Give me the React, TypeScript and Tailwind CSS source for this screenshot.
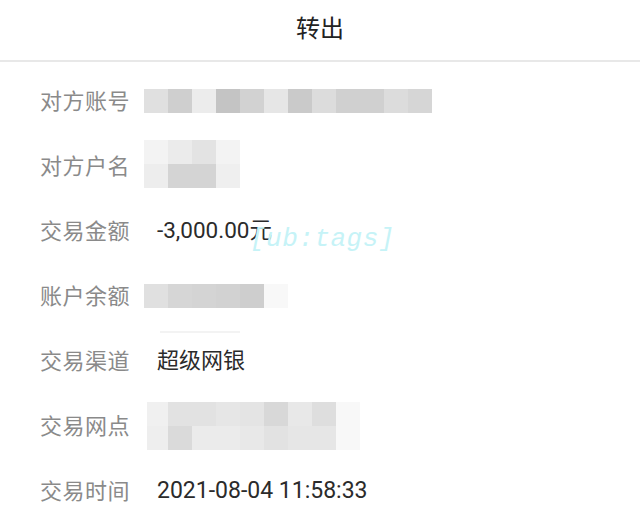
import React from "react";

const row1 = [
  "bg-[#e0e0e0]", "bg-[#cfcfcf]", "bg-[#ececec]", "bg-[#c4c4c4]", "bg-[#d2d2d2]", "bg-[#e6e6e6]",
  "bg-[#cacaca]", "bg-[#dcdcdc]", "bg-[#d0d0d0]", "bg-[#d0d0d0]", "bg-[#dcdcdc]", "bg-[#d6d6d6]",
];
const row2a = ["bg-[#f3f3f3]", "bg-[#ebebeb]", "bg-[#e3e3e3]", "bg-[#f3f3f3]"];
const row2b = ["bg-[#ededed]", "bg-[#d4d4d4]", "bg-[#d4d4d4]", "bg-[#efefef]"];
const row4 = ["bg-[#e0e0e0]", "bg-[#d6d6d6]", "bg-[#d4d4d4]", "bg-[#d2d2d2]", "bg-[#cecece]", "bg-[#f8f8f8]"];
const row6a = ["bg-[#f0f0f0]", "bg-[#e2e2e2]", "bg-[#e2e2e2]", "bg-[#e6e6e6]", "bg-[#e4e4e4]", "bg-[#d8d8d8]", "bg-[#e8e8e8]", "bg-[#dedede]", "bg-[#f8f8f8]"];
const row6b = ["bg-[#eeeeee]", "bg-[#dadada]", "bg-[#ebebeb]", "bg-[#ebebeb]", "bg-[#e8e8e8]", "bg-[#e2e2e2]", "bg-[#e6e6e6]", "bg-[#e6e6e6]", "bg-[#f8f8f8]"];

function Strip({ cells, first }: { cells: string[]; first?: string }) {
  return (
    <div className="flex">
      {cells.map((c, i) => (
        <div key={i} className={`${c} h-[24px] ${i === 0 && first ? first : "w-[24px]"}`} />
      ))}
    </div>
  );
}

function Row({ label, children }: { label: string; children?: React.ReactNode }) {
  return (
    <div className="flex h-[65px] items-center">
      <div className="w-[104px] pl-[40px] shrink-0 box-content text-[22px] leading-none text-[#8a8a8a] tracking-[0.5px] -translate-y-[2px]">
        {label}
      </div>
      <div className="flex-1">{children}</div>
    </div>
  );
}

export default function App() {
  return (
    <div
      className="relative w-[640px] h-[515px] overflow-hidden bg-white"
      style={{ fontFamily: '"Noto Sans CJK SC", "Noto Sans", sans-serif' }}
    >
      <div className="h-[62px] flex items-center justify-center border-b-2 border-[#e8e8e8]">
        <span className="text-[24px] text-[#222] leading-none -mt-[6px]">转出</span>
      </div>
      <div className="pt-[6px]">
        <Row label="对方账号">
          <Strip cells={row1} />
        </Row>
        <Row label="对方户名">
          <div className="-mt-[4px]">
            <Strip cells={row2a} />
            <Strip cells={row2b} />
          </div>
        </Row>
        <Row label="交易金额">
          <span className="inline-block pl-[13px] text-[22.5px] text-[#2b2b2b] leading-none -translate-y-[1px]" style={{ fontFamily: 'Roboto, "Noto Sans CJK SC", sans-serif' }}>
            -3,000.00<span style={{ fontFamily: '"Noto Sans CJK SC", sans-serif' }}>元</span>
          </span>
        </Row>
        <Row label="账户余额">
          <div className="relative">
            <Strip cells={row4} />
            <div className="absolute left-[16px] top-[47px] h-[2px] w-[80px] bg-[#f3f3f3]" />
          </div>
        </Row>
        <Row label="交易渠道">
          <span className="inline-block pl-[13px] text-[22px] text-[#2b2b2b] leading-none -translate-y-[1px]">超级网银</span>
        </Row>
        <Row label="交易网点">
          <div className="pl-[3px]">
            <Strip cells={row6a} first="w-[21px]" />
            <Strip cells={row6b} first="w-[21px]" />
          </div>
        </Row>
        <Row label="交易时间">
          <span className="inline-block pl-[13px] text-[23px] text-[#2b2b2b] leading-none" style={{ fontFamily: 'Roboto, sans-serif' }}>
            2021-08-04 11:58:33
          </span>
        </Row>
      </div>
      <div
        className="absolute left-[250px] top-[226px] text-[26px] italic text-[#c6f3f7] tracking-[0.5px] leading-none"
        style={{ fontFamily: '"Liberation Mono", monospace' }}
      >
        [ub:tags]
      </div>
    </div>
  );
}
